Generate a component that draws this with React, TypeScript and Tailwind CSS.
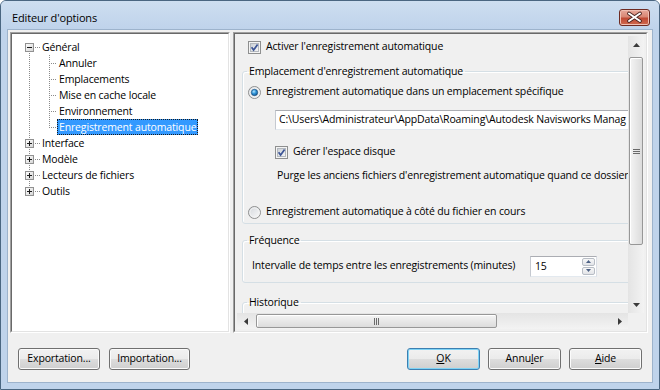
import React from "react";

type TreeRow = {
  label: string;
  kind: "root" | "child";
  box?: "plus" | "minus";
  first?: boolean;
  last?: boolean;
  lastChild?: boolean;
  selected?: boolean;
};

const treeRows: TreeRow[] = [
  { label: "Général", kind: "root", box: "minus", first: true },
  { label: "Annuler", kind: "child" },
  { label: "Emplacements", kind: "child" },
  { label: "Mise en cache locale", kind: "child" },
  { label: "Environnement", kind: "child" },
  { label: "Enregistrement automatique", kind: "child", lastChild: true, selected: true },
  { label: "Interface", kind: "root", box: "plus" },
  { label: "Modèle", kind: "root", box: "plus" },
  { label: "Lecteurs de fichiers", kind: "root", box: "plus" },
  { label: "Outils", kind: "root", box: "plus", last: true },
];

const dot = "#8a8a8a";

function RootLines({ row }: { row: TreeRow }) {
  return (
    <svg width="27" height="16" className="shrink-0">
      <defs>
        <linearGradient id="pm" x1="0" y1="0" x2="1" y2="1">
          <stop offset="0" stopColor="#ffffff" />
          <stop offset="1" stopColor="#d4d4d4" />
        </linearGradient>
      </defs>
      {!row.first && <path d="M16.5 0V4" stroke={dot} strokeDasharray="1 1" />}
      {!row.last && <path d="M16.5 14V16" stroke={dot} strokeDasharray="1 1" />}
      <path d="M22 8.5H27" stroke={dot} strokeDasharray="1 1" />
      <rect x="12.5" y="4.5" width="8" height="8" fill="url(#pm)" stroke="#919191" />
      <path d="M14 8.5H19" stroke="#1a1a1a" />
      {row.box === "plus" && <path d="M16.5 6V11" stroke="#1a1a1a" />}
    </svg>
  );
}

function ChildLines({ row }: { row: TreeRow }) {
  return (
    <svg width="44" height="16" className="shrink-0">
      <path d="M16.5 0V16" stroke={dot} strokeDasharray="1 1" />
      <path d={row.lastChild ? "M36.5 0V9" : "M36.5 0V16"} stroke={dot} strokeDasharray="1 1" />
      <path d="M38 8.5H44" stroke={dot} strokeDasharray="1 1" />
    </svg>
  );
}

function Check() {
  return (
    <svg width="13" height="13" viewBox="0 0 13 13" className="shrink-0">
      <defs>
        <linearGradient id="cbg" x1="0" y1="0" x2="1" y2="1">
          <stop offset="0" stopColor="#c9ced4" />
          <stop offset="1" stopColor="#f7f7f7" />
        </linearGradient>
      </defs>
      <rect x="0.5" y="0.5" width="12" height="12" fill="#f4f4f4" stroke="#8e8f8f" />
      <rect x="2.5" y="2.5" width="8" height="8" fill="url(#cbg)" stroke="#b3b8be" />
      <path d="M3.6 6.3L5.6 9L9.6 3.4" fill="none" stroke="#3d5596" strokeWidth="1.7" />
    </svg>
  );
}

function Radio({ checked }: { checked?: boolean }) {
  return (
    <svg width="13" height="13" viewBox="0 0 13 13" className="shrink-0">
      <defs>
        <linearGradient id="rbg" x1="0" y1="0" x2="1" y2="1">
          <stop offset="0" stopColor="#d2d6db" />
          <stop offset="1" stopColor="#fbfbfb" />
        </linearGradient>
        <radialGradient id="rdot" cx="0.4" cy="0.35" r="0.75">
          <stop offset="0" stopColor="#b4e6ff" />
          <stop offset="0.45" stopColor="#2f94d8" />
          <stop offset="1" stopColor="#0c4b86" />
        </radialGradient>
      </defs>
      <circle cx="6.5" cy="6.5" r="6" fill="url(#rbg)" stroke="#8e8f8f" />
      <circle cx="6.5" cy="6.5" r="4.6" fill="none" stroke="#f2f2f2" />
      {checked && <circle cx="6.5" cy="6.5" r="3.2" fill="url(#rdot)" stroke="#1b4a78" strokeWidth="0.6" />}
    </svg>
  );
}

function Arrow({ dir }: { dir: "up" | "down" | "left" | "right" }) {
  const pts =
    dir === "up" ? "0,4 7,4 3.5,0" : dir === "down" ? "0,0 7,0 3.5,4" : dir === "left" ? "4,0 4,7 0,3.5" : "0,0 0,7 4,3.5";
  const w = dir === "up" || dir === "down" ? 7 : 4;
  const h = dir === "up" || dir === "down" ? 4 : 7;
  return (
    <svg width={w} height={h}>
      <polygon points={pts} fill="#3a3a3a" />
    </svg>
  );
}

function Btn({ children, w, def }: { children: React.ReactNode; w: string; def?: boolean }) {
  return (
    <div
      className={`flex h-[22px] items-center justify-center rounded-[3px] border bg-[linear-gradient(to_bottom,#f2f2f2_0%,#ebebeb_50%,#dddddd_51%,#cfcfcf_100%)] ${w} ${
        def ? "border-[#3c7fb1] shadow-[inset_0_0_0_1px_#7fd3f5]" : "border-[#707070] shadow-[inset_0_0_0_1px_#fbfbfb]"
      }`}
    >
      {children}
    </div>
  );
}

function Group({ label, className, children }: { label: string; className: string; children?: React.ReactNode }) {
  return (
    <fieldset className={`ml-[5px] w-[470px] rounded-[3px] border border-[#d5dfe5] shadow-[inset_1px_1px_0_#ffffff] ${className}`}>
      <legend className="ml-[4px] px-[2px] leading-[16px]">{label}</legend>
      {children}
    </fieldset>
  );
}

export default function App() {
  return (
    <div className="h-[390px] w-[660px] bg-white">
      <div className="flex h-[390px] w-[660px] flex-col overflow-hidden rounded-t-[6px] border border-[#4a6681] bg-[#bfd3eb] font-['Open_Sans',sans-serif] text-[10.5px] tracking-[-0.15px] text-black">
        {/* title bar */}
        <div className="flex h-[28px] shrink-0 items-start justify-between bg-gradient-to-b from-[#cddef0] to-[#bfd3eb] pl-[11px] pr-[9px]">
          <div className="pt-[9px] text-[11px] leading-[16px]">Editeur d'options</div>
          <div className="mt-[8px] h-[17px] w-[31px] rounded-[3px] border border-[#6e2b22] bg-[linear-gradient(to_bottom,#e7a99c_0%,#d98774_45%,#c04a35_55%,#cf6a4f_100%)] shadow-[inset_0_0_0_1px_#f0c0b4]">
            <svg width="29" height="15" viewBox="0 0 29 15">
              <path d="M9 3.5L20 11M20 3.5L9 11" stroke="#4a2420" strokeWidth="3.8" strokeLinecap="round" />
              <path d="M9 3.5L20 11M20 3.5L9 11" stroke="#ffffff" strokeWidth="2" strokeLinecap="round" />
            </svg>
          </div>
        </div>

        {/* client area */}
        <div className="mx-[6px] mb-[6px] flex flex-1 flex-col border border-[#9db3cc] bg-[#f0f0f0]">
          <div className="flex gap-[3px] pl-[2px] pt-[2px]">
            {/* tree */}
            <div className="h-[301px] w-[220px] border border-b-white border-l-[#a0a0a0] border-r-white border-t-[#a0a0a0]">
              <div className="h-full border border-b-[#e3e3e3] border-l-[#696969] border-r-[#e3e3e3] border-t-[#696969] bg-white pl-[1px] pt-[5px]">
                {treeRows.map((row) => (
                  <div key={row.label} className="flex h-[16px] items-center leading-[14px]">
                    {row.kind === "root" ? <RootLines row={row} /> : <ChildLines row={row} />}
                    <span
                      className={`whitespace-nowrap border px-[1px] ${
                        row.selected
                          ? "border-dotted border-[#1a1a1a] bg-[#3399ff] text-white"
                          : "border-transparent"
                      }`}
                    >
                      {row.label}
                    </span>
                  </div>
                ))}
              </div>
            </div>

            {/* settings panel */}
            <div className="h-[301px] w-[415px] border border-b-white border-l-[#a0a0a0] border-r-white border-t-[#a0a0a0]">
              <div className="h-full border border-b-[#e3e3e3] border-l-[#696969] border-r-[#e3e3e3] border-t-[#696969] p-[2px]">
                <div className="grid h-full grid-cols-[1fr_16px] grid-rows-[1fr_16px]">
                  <div className="overflow-hidden">
                    <div className="w-[480px]">
                      <div className="flex h-[22px] items-center gap-[5px] pl-[11px]">
                        <Check />
                        <span>Activer l'enregistrement automatique</span>
                      </div>

                      <Group label="Emplacement d'enregistrement automatique" className="mt-[5px] pb-[1px]">
                        <div className="mt-[3px] flex h-[20px] items-center gap-[5px] pl-[5px]">
                          <Radio checked />
                          <span className="whitespace-nowrap">Enregistrement automatique dans un emplacement spécifique</span>
                        </div>
                        <div className="ml-[32px] mt-[8px] flex h-[20px] w-[420px] items-center whitespace-nowrap border border-b-[#e3e9ef] border-l-[#c5c9d0] border-r-[#dbdfe6] border-t-[#abadb3] bg-white pl-[3px]">
                          {"C:\\Users\\Administrateur\\AppData\\Roaming\\Autodesk Navisworks Manag"}
                        </div>
                        <div className="ml-[32px] mt-[12px] flex h-[20px] items-center gap-[5px]">
                          <Check />
                          <span>Gérer l'espace disque</span>
                        </div>
                        <div className="ml-[34px] mt-[4px] flex h-[20px] items-center whitespace-nowrap">
                          Purge les anciens fichiers d'enregistrement automatique quand ce dossier
                        </div>
                        <div className="mt-[16px] flex h-[20px] items-center gap-[5px] pl-[5px]">
                          <Radio />
                          <span className="whitespace-nowrap">Enregistrement automatique à côté du fichier en cours</span>
                        </div>
                      </Group>

                      <Group label="Fréquence" className="mt-[8px] pb-[5px]">
                        <div className="mt-[7px] flex h-[22px] items-center pl-[9px]">
                          <span className="w-[278px] whitespace-nowrap">Intervalle de temps entre les enregistrements (minutes)</span>
                          <div className="flex h-[21px] w-[67px] border border-b-[#e3e9ef] border-l-[#c5c9d0] border-r-[#dbdfe6] border-t-[#abadb3] bg-white">
                            <div className="flex-1 pl-[4px] leading-[18px]">15</div>
                            <div className="flex w-[15px] flex-col gap-[1px] p-[1px]">
                              <div className="flex flex-1 items-center justify-center rounded-[2px] border border-[#b8bdc5] bg-gradient-to-b from-[#f7f7f7] to-[#e2e4e8]">
                                <svg width="5" height="3"><polygon points="0,3 5,3 2.5,0" fill="#4d6185" /></svg>
                              </div>
                              <div className="flex flex-1 items-center justify-center rounded-[2px] border border-[#b8bdc5] bg-gradient-to-b from-[#f7f7f7] to-[#e2e4e8]">
                                <svg width="5" height="3"><polygon points="0,0 5,0 2.5,3" fill="#4d6185" /></svg>
                              </div>
                            </div>
                          </div>
                        </div>
                      </Group>

                      <Group label="Historique" className="mt-[11px] h-[60px]" />
                    </div>
                  </div>

                  {/* vertical scrollbar */}
                  <div className="flex flex-col bg-gradient-to-r from-[#e4e4e4] to-[#f3f3f3]">
                    <div className="flex h-[17px] items-center justify-center">
                      <Arrow dir="up" />
                    </div>
                    <div className="flex-1 px-[1px] pt-[4px]">
                      <div className="flex h-[188px] items-center justify-center rounded-[2px] border border-[#979797] bg-gradient-to-r from-[#f4f4f4] to-[#dcdcdc] shadow-[inset_1px_1px_0_#ffffff]">
                        <svg width="7" height="5">
                          <path d="M0 0.5H7M0 2.5H7M0 4.5H7" stroke="#6a6a6a" />
                        </svg>
                      </div>
                    </div>
                    <div className="flex h-[17px] items-center justify-center">
                      <Arrow dir="down" />
                    </div>
                  </div>

                  {/* horizontal scrollbar */}
                  <div className="flex bg-gradient-to-b from-[#e4e4e4] to-[#f3f3f3]">
                    <div className="flex w-[17px] items-center justify-center">
                      <Arrow dir="left" />
                    </div>
                    <div className="flex-1 py-[1px] pl-[2px]">
                      <div className="flex h-full w-[241px] items-center justify-center rounded-[2px] border border-[#979797] bg-gradient-to-b from-[#f4f4f4] to-[#dcdcdc] shadow-[inset_1px_1px_0_#ffffff]">
                        <svg width="5" height="7">
                          <path d="M0.5 0V7M2.5 0V7M4.5 0V7" stroke="#6a6a6a" />
                        </svg>
                      </div>
                    </div>
                    <div className="flex w-[17px] items-center justify-center">
                      <Arrow dir="right" />
                    </div>
                  </div>
                  <div className="bg-[#f0f0f0]" />
                </div>
              </div>
            </div>
          </div>

          {/* buttons */}
          <div className="mt-[15px] flex justify-between px-[10px]">
            <div className="flex gap-[9px]">
              <Btn w="w-[82px]">Exportation...</Btn>
              <Btn w="w-[81px]">Importation...</Btn>
            </div>
            <div className="flex gap-[8px]">
              <Btn w="w-[73px]" def>
                <span>
                  <span className="underline">O</span>K
                </span>
              </Btn>
              <Btn w="w-[73px]">
                <span>
                  Annu<span className="underline">l</span>er
                </span>
              </Btn>
              <Btn w="w-[73px]">
                <span>
                  <span className="underline">A</span>ide
                </span>
              </Btn>
            </div>
          </div>
        </div>
      </div>
    </div>
  );
}
